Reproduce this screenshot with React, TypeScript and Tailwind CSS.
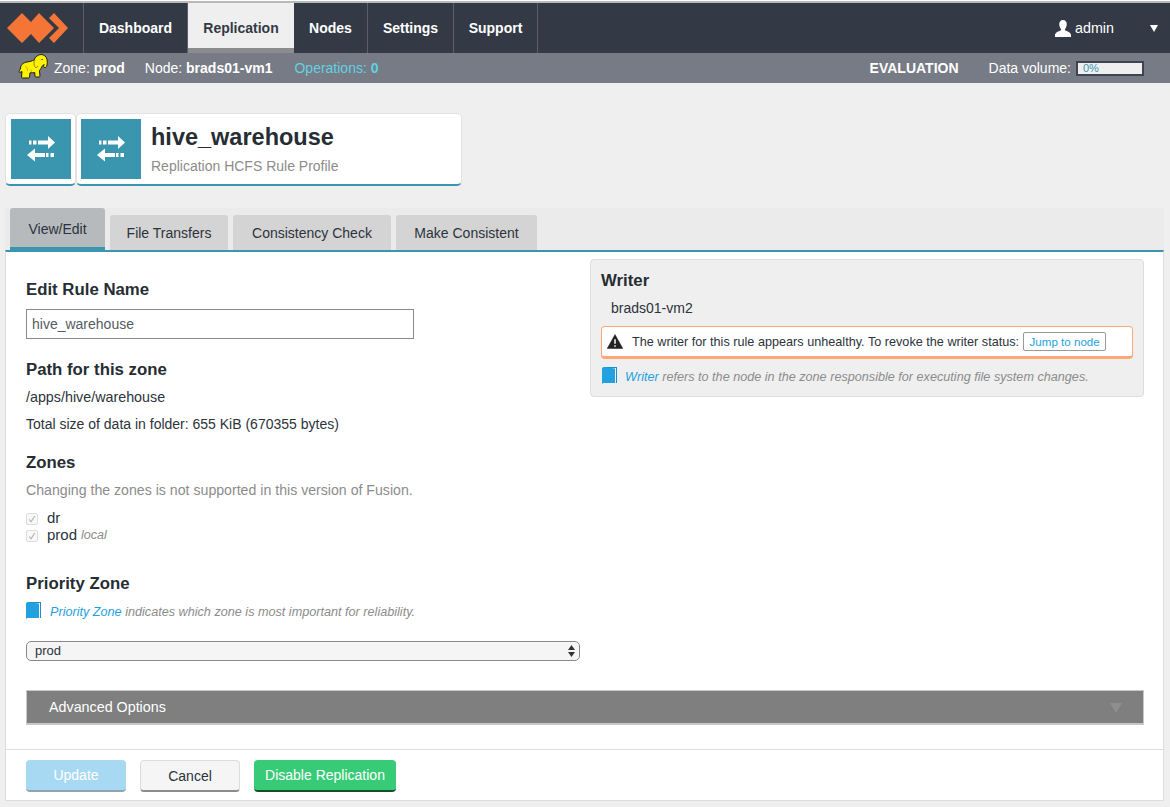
import React from 'react';

const navItems = [
	{ label: 'Dashboard', width: 'w-[104px]' },
	{ label: 'Replication', width: 'w-[106px]', active: true },
	{ label: 'Nodes', width: 'w-[74px]' },
	{ label: 'Settings', width: 'w-[86px]' },
	{ label: 'Support', width: 'w-[84px]' },
];

const tabs = [
	{ label: 'File Transfers', width: 'w-[118px]' },
	{ label: 'Consistency Check', width: 'w-[158px]' },
	{ label: 'Make Consistent', width: 'w-[141px]' },
];

const Logo = () => (
	<svg width="84" height="50" viewBox="0 0 84 50" className="block">
		<path d="M7 25 22 10l9 9 8-9 15 15-15 15-8-9-9 9z" fill="#f47536" />
		<path d="M54 10 68 25 54 40l-5-5 10-10-10-10z" fill="#f47536" />
	</svg>
);

const Elephant = () => (
	<svg width="30" height="27" viewBox="0 0 30 27" className="block">
		<path
			d="M2.500 15C3 11 6 9.500 9 9c3-.5 5-1 7-2 1-3 4-5.500 7-5.500 3 0 5.500 2 6 5 .4 2.500.5 5-.5 7-.6 1.200-2.500 1.500-3 .2-.3-.8.3-1.500.8-2-1 0-1.800.8-2.300 1.800-.7 1.500-1.500 3-2.500 4l.5 5.500c0 .6-.4 1-1 1h-3c-.6 0-1-.4-1-1l-.3-3.500c-1.500.4-3 .4-4.700.2l-.5 4.300c-.1.600-.5 1-1 1H4.500c-.6 0-1-.4-1-1l.5-5.500c-.8.4-1.500.8-2.500.8C.800 19.500 1 18 1.500 17.500c.6-.6.900-1.500 1-2.500z"
			fill="#fff200"
			stroke="#1c1c1c"
			strokeWidth="1"
		/>
		<path d="M17 7c-1.500 2-1.500 5 .5 7.500 1 .3 2-.5 2.500-1.500" fill="none" stroke="#8a8300" strokeWidth="1" />
		<path d="M23.500 6.500h1.200" fill="none" stroke="#1c1c1c" strokeWidth="1" />
		<path d="M7 13c2 1 3 3 2.500 5M13 19.500c.5-1 .5-2 0-3" fill="none" stroke="#b5ac00" strokeWidth="0.800" />
	</svg>
);

const TransferIcon = () => (
	<svg width="28" height="26" viewBox="0 0 28 26" fill="#fff">
		<path d="M11 4.500h10V0l7 6.500L21 13V8.500H11z" />
		<path d="M2 4.500h2.500v4H2zM6 4.500h3.500v4H6z" />
		<path d="M18 17H8v-4.500L0 19l8 6.500V21h10z" />
		<path d="M19 17h2.500v4H19zM23.500 17H27v4h-3.500z" />
	</svg>
);

const UserIcon = () => (
	<svg width="16" height="17" viewBox="0 0 17 18" fill="#fff" className="block">
		<path d="M8.500 0C11 0 12.500 2 12.500 4.500c0 2-.8 3.800-1.800 4.900-.4.500-.2 1.300.4 1.600 2 .9 5.400 2 5.900 4.500.1.700.0 2.500.0 2.500H0s-.1-1.800 0-2.500c.5-2.500 3.900-3.600 5.900-4.500.6-.3.8-1.100.4-1.600C5.300 8.300 4.500 6.500 4.500 4.500 4.500 2 6 0 8.500 0z" />
	</svg>
);

const BookIcon = () => (
	<svg width="15" height="18" viewBox="0 0 15 18" className="block shrink-0">
		<path d="M2 0h13v16h-1V1H2.500z" fill="#1f8fc9" />
		<path d="M0 2C0 .8.800 0 2 0l11 1.500V16H2c-1.200 0-2 .5-2 2z" fill="#22a0e0" />
	</svg>
);

const WarningIcon = () => (
	<svg width="16" height="15" viewBox="0 0 16 15" className="block shrink-0">
		<path
			fillRule="evenodd"
			d="M8 .500 15.800 14.500H.200zM7 5v5h2V5zM7 11v2h2v-2z"
			fill="#222"
			stroke="#222"
			strokeWidth="0.500"
			strokeLinejoin="round"
		/>
	</svg>
);

const DisabledCheck = () => (
	<span className="flex h-[12px] w-[12px] items-center justify-center rounded-[2px] border border-[#dedede] bg-[#f8f8f8]">
		<svg width="8" height="8" viewBox="0 0 8 8" fill="none" stroke="#b5b5b5" strokeWidth="1.200">
			<path d="M1.200 4.500 3 6.800 6.800 1" />
		</svg>
	</span>
);

const SectionTitle = ({ children, className }: { children: React.ReactNode; className: string }) => (
	<h3 className={`h-[20px] text-[16.800px] leading-[22px] font-bold text-[#262d33] ${className}`}>{children}</h3>
);

export default function App() {
	return (
		<div className="h-[807px] w-[1170px] overflow-hidden bg-[#efefef] font-['Liberation_Sans',Arial,sans-serif] text-[14px] text-[#2c333b]">
			<div className="h-[3px] border-t border-white bg-[#b9b9b9]" />

			<nav className="flex h-[50px] items-stretch bg-[#343a45]">
				<div className="w-[84px] border-r border-[#5b5f66]">
					<Logo />
				</div>
				{navItems.map((item) =>
					item.active ? (
						<div
							key={item.label}
							className={`${item.width} flex items-center justify-center border-b-[5px] border-[#8c8c8c] bg-[#efefef] pt-[5px] text-[14px] font-bold text-[#343a45]`}
						>
							{item.label}
						</div>
					) : (
						<div
							key={item.label}
							className={`${item.width} flex items-center justify-center border-r border-[#5b5f66] text-[14px] font-bold text-white`}
						>
							{item.label}
						</div>
					),
				)}
				<div className="ml-auto flex items-center pr-[12px]">
					<UserIcon />
					<span className="ml-[4px] pt-[2px] text-[14.300px] text-white">admin</span>
					<span className="ml-[36px] h-0 w-0 border-x-[4px] border-t-[7px] border-x-transparent border-t-white" />
				</div>
			</nav>

			<div className="flex h-[30px] items-center bg-[#777b85] text-[14px] text-white">
				<div className="ml-[18px] mt-[-4px]">
					<Elephant />
				</div>
				<span className="ml-[6px]">
					Zone: <b>prod</b>
				</span>
				<span className="ml-[20px]">
					Node: <b>brads01-vm1</b>
				</span>
				<span className="ml-[22px] text-[#62d0e2]">
					Operations: <b>0</b>
				</span>
				<b className="ml-auto">EVALUATION</b>
				<span className="ml-[30px]">Data volume:</span>
				<div className="ml-[5px] mr-[26px] flex h-[15px] w-[68px] items-center border-2 border-[#3d4553] bg-[#efefef] pl-[5px] text-[11px] text-[#3a96ae]">
					0%
				</div>
			</div>

			<div className="ml-[5px] mt-[30px] flex h-[73px] items-stretch">
				<div className="w-[71px] rounded-[5px] border border-b-2 border-[#e2e2e2] border-b-[#3a96ae] bg-white pl-[5px] pt-[5px]">
					<div className="flex h-[60px] w-[60px] items-center justify-center bg-[#3a96ae]">
						<TransferIcon />
					</div>
				</div>
				<div className="flex w-[386px] rounded-[5px] border border-b-2 border-[#e2e2e2] border-b-[#3a96ae] bg-white pl-[4px] pt-[5px]">
					<div className="flex h-[60px] w-[60px] items-center justify-center bg-[#3a96ae]">
						<TransferIcon />
					</div>
					<div className="ml-[10px]">
						<div className="text-[23.500px] leading-[36px] font-bold text-[#262d33]">hive_warehouse</div>
						<div className="mt-[2px] text-[14px] leading-[18px] text-[#8c8c8c]">Replication HCFS Rule Profile</div>
					</div>
				</div>
			</div>

			<div className="ml-[5px] mr-[6px] mt-[22px] flex h-[42px] items-end gap-[5px] bg-[#ebebeb] pl-[5px]">
				<div className="flex h-[42px] w-[95px] items-center justify-center rounded-t-[3px] border-b-[3px] border-[#3a96ae] bg-[#b6babd] pt-[3px] text-[14px]">
					View/Edit
				</div>
				{tabs.map((tab) => (
					<div
						key={tab.label}
						className={`${tab.width} flex h-[35px] items-center justify-center rounded-t-[3px] bg-[#d4d4d4] pt-[2px] text-[14px]`}
					>
						{tab.label}
					</div>
				))}
			</div>

			<div className="ml-[5px] mr-[6px] border-x border-b border-[#dddddd] border-t-2 border-t-[#3a96ae] bg-white">
				<div className="flex gap-[10px] pl-[20px]">
					<div className="w-[554px] pt-[27px]">
						<SectionTitle className="">Edit Rule Name</SectionTitle>
						<div className="mt-[10px] flex h-[30px] w-[388px] items-center border border-[#8a8a8a] pl-[5px] text-[14px] text-[#555b62]">
							hive_warehouse
						</div>
						<SectionTitle className="mt-[20px]">Path for this zone</SectionTitle>
						<p className="mt-[8px] text-[14.300px] leading-[20px]">/apps/hive/warehouse</p>
						<p className="mt-[7px] leading-[20px]">Total size of data in folder: 655 KiB (670355 bytes)</p>
						<SectionTitle className="mt-[18px]">Zones</SectionTitle>
						<p className="mt-[8px] text-[14.150px] leading-[20px] text-[#8c8c8c]">
							Changing the zones is not supported in this version of Fusion.
						</p>
						<div className="mt-[10px] flex h-[17px] items-center">
							<DisabledCheck />
							<span className="ml-[9px] text-[15px]">dr</span>
						</div>
						<div className="flex h-[17px] items-center">
							<DisabledCheck />
							<span className="ml-[9px] text-[15px]">prod</span>
							<i className="ml-[4px] text-[12.500px] text-[#8c8c8c]">local</i>
						</div>
						<SectionTitle className="mt-[29px]">Priority Zone</SectionTitle>
						<div className="mt-[8px] flex h-[20px] items-center text-[12.650px] italic text-[#8c8c8c]">
							<BookIcon />
							<span className="ml-[9px] whitespace-pre pt-[3px]">
								<span className="text-[#1f9fe0]">Priority Zone</span> indicates which zone is most important for reliability.
							</span>
						</div>
						<div className="mt-[20px] flex h-[20px] items-center justify-between rounded-[5px] border border-[#8a8a8a] bg-[#f5f5f5] pl-[8px] pr-[4px] text-[13px]">
							prod
							<svg width="7" height="12" viewBox="0 0 7 12" fill="#333" className="block">
								<path d="M3.500 0 7 5H0zM0 7h7l-3.500 5z" />
							</svg>
						</div>
					</div>

					<div className="mt-[7px] h-[138px] w-[554px] rounded-[4px] border border-[#dddddd] bg-[#efefef] pl-[10px] pr-[10px] pt-[10px]">
						<SectionTitle className="">Writer</SectionTitle>
						<p className="ml-[10px] mt-[8px] leading-[20px]">brads01-vm2</p>
						<div className="mt-[8px] flex h-[33px] items-center rounded-[4px] border border-b-[3px] border-[#ffa775] bg-white pl-[5px] text-[12.670px]">
							<WarningIcon />
							<span className="ml-[9px] pt-[2px]">The writer for this rule appears unhealthy. To revoke the writer status:</span>
							<span className="ml-[4px] flex h-[19px] w-[83px] items-center justify-center rounded-[2px] border border-[#999999] text-[11.600px] text-[#1f9fe0]">
								Jump to node
							</span>
						</div>
						<div className="mt-[7px] flex h-[20px] items-center text-[12.650px] italic text-[#8c8c8c]">
							<span className="ml-[1px]">
								<BookIcon />
							</span>
							<span className="ml-[8px] whitespace-pre pt-[3px]">
								<span className="text-[#1f9fe0]">Writer</span> refers to the node in the zone responsible for executing file system changes.
							</span>
						</div>
					</div>
				</div>

				<div className="ml-[20px] mr-[19px] mt-[29px] flex h-[35px] items-center justify-between border border-b-2 border-[#c8c8c8] bg-[#7f7f7f] pl-[22px] pr-[21px] pt-[2px] text-[14.300px] text-white">
					Advanced Options
					<span className="h-0 w-0 border-x-[6px] border-t-[10px] border-x-transparent border-t-[#8f8f8f]" />
				</div>

				<div className="mt-[24px] flex h-[51px] gap-[14px] border-t border-[#dddddd] pl-[20px] pt-[10px]">
					<button className="h-[32px] w-[100px] rounded-[4px] border-b-2 border-[#8fa3ae] bg-[#a8d9f2] pt-[1px] text-[14px] text-white">
						Update
					</button>
					<button className="h-[32px] w-[100px] rounded-[4px] border border-b-2 border-[#dddddd] border-b-[#8c8c8c] bg-[#f5f5f5] pt-[1px] text-[14px]">
						Cancel
					</button>
					<button className="h-[32px] w-[142px] rounded-[4px] border-b-2 border-[#14502e] bg-[#38cb77] pt-[1px] text-[14px] text-white">
						Disable Replication
					</button>
				</div>
			</div>
		</div>
	);
}
